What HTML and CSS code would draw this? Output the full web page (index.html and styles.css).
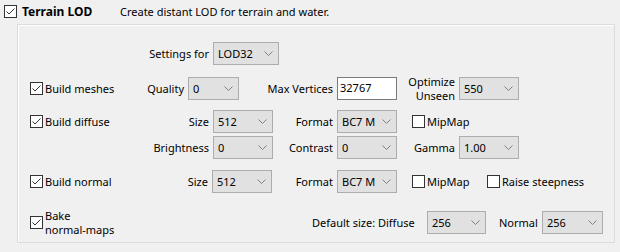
FILE: index.html
```html
<!DOCTYPE html>
<html lang="en">
<head>
    <meta charset="UTF-8">
    <title>Terrain LOD</title>
    <link rel="stylesheet" href="styles.css">
</head>
<body>
    <div class="title-row">
        <span class="box"><svg width="11" height="11" viewBox="0 0 11 11"><polyline points="1.5,5.5 4,8 9.5,2.5" /></svg></span>
        <span class="title">Terrain LOD</span>
        <span class="desc">Create distant LOD for terrain and water.</span>
    </div>

    <div class="group">
        <!-- Settings for -->
        <div class="row row-a">
            <span class="cell-check"></span>
            <span class="lbl w73">Settings for</span>
            <span class="combo w66">LOD32<svg class="arrow" width="9" height="5" viewBox="0 0 9 5"><polyline points="0.5,0.5 4.5,4.5 8.5,0.5" /></svg></span>
        </div>

        <!-- Meshes -->
        <div class="row row-b">
            <label class="check cell-check">
                <span class="box"><svg width="11" height="11" viewBox="0 0 11 11"><polyline points="1.5,5.5 4,8 9.5,2.5" /></svg></span>
                <span>Build meshes</span>
            </label>
            <span class="lbl w48">Quality</span>
            <span class="combo w51">0<svg class="arrow" width="9" height="5" viewBox="0 0 9 5"><polyline points="0.5,0.5 4.5,4.5 8.5,0.5" /></svg></span>
            <span class="lbl w98">Max Vertices</span>
            <span class="edit w60">32767</span>
            <span class="lbl w62 two">Optimize<br>Unseen</span>
            <span class="combo w60">550<svg class="arrow" width="9" height="5" viewBox="0 0 9 5"><polyline points="0.5,0.5 4.5,4.5 8.5,0.5" /></svg></span>
        </div>

        <!-- Diffuse -->
        <div class="row row-c">
            <label class="check cell-check">
                <span class="box"><svg width="11" height="11" viewBox="0 0 11 11"><polyline points="1.5,5.5 4,8 9.5,2.5" /></svg></span>
                <span>Build diffuse</span>
            </label>
            <span class="lbl w73">Size</span>
            <span class="combo w60">512<svg class="arrow" width="9" height="5" viewBox="0 0 9 5"><polyline points="0.5,0.5 4.5,4.5 8.5,0.5" /></svg></span>
            <span class="lbl w64">Format</span>
            <span class="combo w60">BC7 M<svg class="arrow" width="9" height="5" viewBox="0 0 9 5"><polyline points="0.5,0.5 4.5,4.5 8.5,0.5" /></svg></span>
            <label class="check opt w90">
                <span class="box"></span>
                <span>MipMap</span>
            </label>
        </div>

        <div class="row row-d">
            <span class="cell-check"></span>
            <span class="lbl w73">Brightness</span>
            <span class="combo w60">0<svg class="arrow" width="9" height="5" viewBox="0 0 9 5"><polyline points="0.5,0.5 4.5,4.5 8.5,0.5" /></svg></span>
            <span class="lbl w64">Contrast</span>
            <span class="combo w60">0<svg class="arrow" width="9" height="5" viewBox="0 0 9 5"><polyline points="0.5,0.5 4.5,4.5 8.5,0.5" /></svg></span>
            <span class="lbl w62">Gamma</span>
            <span class="combo w60">1.00<svg class="arrow" width="9" height="5" viewBox="0 0 9 5"><polyline points="0.5,0.5 4.5,4.5 8.5,0.5" /></svg></span>
        </div>

        <!-- Normal -->
        <div class="row row-e">
            <label class="check cell-check">
                <span class="box"><svg width="11" height="11" viewBox="0 0 11 11"><polyline points="1.5,5.5 4,8 9.5,2.5" /></svg></span>
                <span>Build normal</span>
            </label>
            <span class="lbl w72">Size</span>
            <span class="combo w60">512<svg class="arrow" width="9" height="5" viewBox="0 0 9 5"><polyline points="0.5,0.5 4.5,4.5 8.5,0.5" /></svg></span>
            <span class="lbl w65">Format</span>
            <span class="combo w60">BC7 M<svg class="arrow" width="9" height="5" viewBox="0 0 9 5"><polyline points="0.5,0.5 4.5,4.5 8.5,0.5" /></svg></span>
            <label class="check opt w90">
                <span class="box"></span>
                <span>MipMap</span>
            </label>
            <label class="check">
                <span class="box"></span>
                <span>Raise steepness</span>
            </label>
        </div>

        <div class="row row-f">
            <label class="check cell-bake">
                <span class="box"><svg width="11" height="11" viewBox="0 0 11 11"><polyline points="1.5,5.5 4,8 9.5,2.5" /></svg></span>
                <span class="two">Bake<br>normal-maps</span>
            </label>
            <span class="lbl-left w115">Default size: Diffuse</span>
            <span class="combo w59">256<svg class="arrow" width="9" height="5" viewBox="0 0 9 5"><polyline points="0.5,0.5 4.5,4.5 8.5,0.5" /></svg></span>
            <span class="lbl-left w56 pad13">Normal</span>
            <span class="combo w61">256<svg class="arrow" width="9" height="5" viewBox="0 0 9 5"><polyline points="0.5,0.5 4.5,4.5 8.5,0.5" /></svg></span>
        </div>
    </div>
</body>
</html>
```

FILE: styles.css
```css
* {
    margin: 0;
    padding: 0;
    box-sizing: border-box;
}

body {
    font-family: "Noto Sans", "Open Sans", sans-serif;
    font-size: 11px;
    color: #000000;
    background-color: #f0f0f0;
    width: 620px;
    height: 252px;
    overflow: hidden;
}

/* Header line */
.title-row {
    display: flex;
    align-items: center;
    height: 24px;
    padding-left: 4px;
    padding-bottom: 2px;
}

.title {
    font-size: 12px;
    font-weight: bold;
    margin-left: 3px;
    width: 98px;
}

/* Group frame */
.group {
    margin-left: 17px;
    width: 598px;
    height: 219px;
    border: 1px solid #dcdcdc;
    box-shadow: inset 1px 1px 0 #ffffff;
    padding-left: 12px;
    padding-top: 17px;
}

.row {
    display: flex;
    align-items: center;
    height: 23px;
}

.row-b { margin-top: 12px; }
.row-c { margin-top: 10px; }
.row-d { margin-top: 3px; }
.row-e { margin-top: 11px; }
.row-f { margin-top: 18px; }

.cell-check {
    width: 110px;
    flex-shrink: 0;
}

.cell-bake {
    width: 282px;
    flex-shrink: 0;
}

/* Labels */
.lbl {
    text-align: right;
    padding-right: 4px;
    flex-shrink: 0;
    white-space: nowrap;
}

.lbl-left {
    flex-shrink: 0;
    white-space: nowrap;
}

.pad13 {
    padding-left: 13px;
}

.two {
    line-height: 14px;
}

.w48 { width: 48px; }
.w51 { width: 51px; }
.w56 { width: 56px; }
.w59 { width: 59px; }
.w60 { width: 60px; }
.w61 { width: 61px; }
.w62 { width: 62px; }
.w64 { width: 64px; }
.w65 { width: 65px; }
.w66 { width: 66px; }
.w72 { width: 72px; }
.w73 { width: 73px; }
.w90 { width: 90px; }
.w98 { width: 98px; }
.w115 { width: 115px; }

/* Combo boxes */
.combo {
    position: relative;
    height: 23px;
    flex-shrink: 0;
    background-color: #e1e1e1;
    border: 1px solid #adadad;
    padding-left: 4px;
    line-height: 21px;
}

.arrow {
    position: absolute;
    right: 5px;
    top: 8px;
}

.arrow polyline {
    fill: none;
    stroke: #808080;
    stroke-width: 1;
}

.edit {
    height: 23px;
    flex-shrink: 0;
    background-color: #ffffff;
    border: 1px solid #7a7a7a;
    padding-left: 2px;
    line-height: 19px;
}

/* Check boxes */
.check {
    display: flex;
    align-items: center;
}

.opt {
    padding-left: 15px;
    flex-shrink: 0;
}

.box {
    width: 13px;
    height: 13px;
    border: 1px solid #333333;
    background-color: #ffffff;
    margin-right: 2px;
    flex-shrink: 0;
}

.box svg {
    display: block;
}

.box polyline {
    fill: none;
    stroke: #333333;
    stroke-width: 1;
}
```
